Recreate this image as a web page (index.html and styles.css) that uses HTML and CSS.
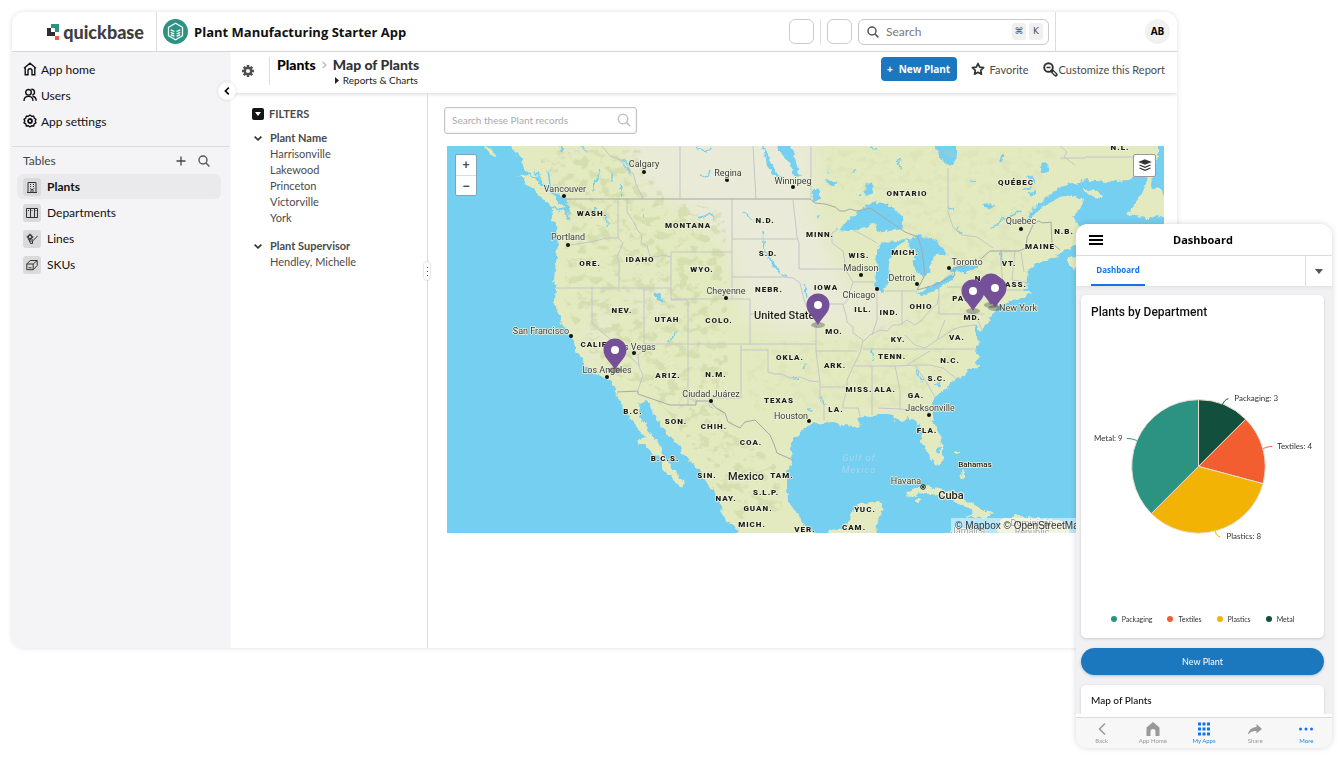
FILE: index.html
```html
<!DOCTYPE html>
<html lang="en">
<head>
<meta charset="utf-8">
<meta name="viewport" content="width=device-width, initial-scale=1">
<title>Plant Manufacturing Starter App</title>
<link rel="stylesheet" href="styles.css">
</head>
<body>
<div class="stage">
  <div class="window">
    <header class="topbar">
      <a class="brand" href="#" aria-label="quickbase">
        <svg width="13" height="16" viewBox="0 0 13 16"><path d="M4 0h8v8h-4V4H4z" fill="#2c9282"/><path d="M0 4h4v4h4v4H0z" fill="#2e2e2e"/><path d="M8 12h4v4H8z" fill="#f35e31"/></svg>
        <span>quickbase</span>
      </a>
      <div class="app-name">
        <svg width="25" height="25" viewBox="0 0 25 25" fill="none" stroke="#fff" stroke-width="1.300" stroke-linejoin="round"><circle cx="12.500" cy="12.500" r="12.500" fill="#2c9282" stroke="none"/><path d="M12.500 4.200l7 4v8.600l-7 4-7-4V8.200z"/><path d="M7.800 10.800l3.600 1.700M7.800 13.300l3.600 1.700M7.800 15.600l3.600 1.800M17.200 10.800l-3.600 1.700M17.200 13.300l-3.600 1.700M17.200 15.600l-3.600 1.800"/></svg>
        <h1>Plant Manufacturing Starter App</h1>
      </div>
      <div class="top-actions">
        <button class="square" type="button" aria-label="Notifications"></button>
        <span class="sep"></span>
        <button class="square" type="button" aria-label="Help"></button>
        <label class="global-search">
          <svg width="12" height="12" viewBox="0 0 12 12" fill="none" stroke="#555" stroke-width="1.500"><circle cx="5" cy="5" r="4"/><path d="M8 8l3.400 3.400"/></svg>
          <input type="search" placeholder="Search" aria-label="Search">
          <kbd>⌘</kbd><kbd>K</kbd>
        </label>
      </div>
      <div class="account"><button class="avatar" type="button">AB</button></div>
    </header>

    <div class="body">
      <aside class="sidebar">
        <nav class="main-nav">
          <a href="#"><svg width="14" height="14" viewBox="0 0 14 14" fill="none" stroke="#111" stroke-width="1.400"><path d="M1 6.200L7 1.200l6 5M2.200 5.500V12.800H5V8.800a2 2 0 0 1 4 0v4h2.800V5.500"/></svg>App home</a>
          <a href="#"><svg width="14" height="14" viewBox="0 0 14 14" fill="none" stroke="#111" stroke-width="1.400"><circle cx="5.500" cy="4.300" r="2.800"/><path d="M1 13c0-3 1.800-4.600 4.500-4.600S10 10 10 13M8.300 1.300a2.900 2.900 0 0 1 1 5.700M9.500 8.200c2.300.300 3.600 1.800 3.700 4.500"/></svg>Users</a>
          <a href="#"><svg width="14" height="14" viewBox="0 0 14 14" fill="none" stroke="#111" stroke-width="1.400" stroke-linejoin="round"><path d="M7 1l1.600 1.300 2.100-.200.500 2.100L13 5.300 12.200 7l.8 1.800-1.800 1.100-.5 2.100-2.100-.200L7 13l-1.600-1.200-2.100.200-.5-2.100L1 8.800 1.800 7 1 5.300l1.800-1.100.5-2.100 2.100.200z"/><circle cx="7" cy="7" r="2" stroke-width="1.800"/></svg>App settings</a>
        </nav>
        <div class="tables-head">
          <h2>Tables</h2>
          <button type="button" aria-label="Add table"><svg width="10" height="10" viewBox="0 0 10 10" stroke="#444" stroke-width="1.300"><path d="M5 .5v9M.5 5h9"/></svg></button>
          <button type="button" aria-label="Search tables"><svg width="12" height="12" viewBox="0 0 12 12" fill="none" stroke="#555" stroke-width="1.400"><circle cx="5" cy="5" r="4"/><path d="M8 8l3.400 3.400"/></svg></button>
        </div>
        <nav class="table-nav">
          <a class="active" href="#"><i><svg width="12" height="12" viewBox="0 0 12 12" fill="none" stroke="#333"><path d="M1 11.500h10M2 11V1.500h8V11M5 11V8.500h2V11M4 3.500h1M7 3.500h1M4 5.500h1M7 5.500h1M4 7.500h.7M7.500 7.500h.7"/></svg></i>Plants</a>
          <a href="#"><i><svg width="12" height="12" viewBox="0 0 12 12" fill="none" stroke="#333"><path d="M.5 1.500h11v9H.5zM4.500 1.500v9M8.500 1.500v9M2 3.500h1M5.500 3.500h1M9.500 3.500h1"/></svg></i>Departments</a>
          <a href="#"><i><svg width="12" height="12" viewBox="0 0 12 12" fill="none" stroke="#333"><circle cx="4" cy="4" r="1.600"/><path d="M4 .8L.8 4 4 7.200 7.200 4zM2.500 6l1 2M5.500 5.700l1.500 2L11.500 3M3.500 8h3v2.500h-2z"/></svg></i>Lines</a>
          <a href="#"><i><svg width="12" height="12" viewBox="0 0 12 12" fill="none" stroke="#333"><path d="M.8 5h6.400v5.700H.8zM.8 5l3.400-3.500h7L7.200 5M11.200 1.500v5l-4 4.200M2.500 8.800h3"/></svg></i>SKUs</a>
        </nav>
        <button class="collapse" type="button" aria-label="Collapse sidebar"><svg width="6" height="8" viewBox="0 0 6 8" fill="none" stroke="#000" stroke-width="1.600"><path d="M4.800.6L1.400 4l3.400 3.400"/></svg></button>
      </aside>

      <main class="content">
        <div class="page-head">
          <button class="gear" type="button" aria-label="Page settings"><svg width="12" height="12" viewBox="0 0 12 12"><g stroke="#4f4f4f" stroke-width="2.600"><path d="M6 0v12M0 6h12M1.800 1.800l8.400 8.400M10.200 1.800l-8.400 8.400"/></g><circle cx="6" cy="6" r="3.200" fill="#fff" stroke="#4f4f4f" stroke-width="2.300"/></svg></button>
          <div class="crumbs">
            <a class="crumb-root" href="#">Plants</a>
            <svg width="5" height="8" viewBox="0 0 5 8" fill="none" stroke="#bbb" stroke-width="1.400"><path d="M.7 1L3.900 4 .7 7"/></svg>
            <h2>Map of Plants</h2>
            <a class="reports" href="#"><svg width="4" height="7" viewBox="0 0 4 7"><path d="M0 0l4 3.500L0 7z" fill="#222"/></svg>Reports &amp; Charts</a>
          </div>
          <div class="page-actions">
            <button class="primary" type="button"><span>+</span>New Plant</button>
            <button class="plain" type="button"><svg width="14" height="14" viewBox="0 0 14 14" fill="none" stroke="#333" stroke-width="1.700" stroke-linejoin="round"><path d="M7 1.500l1.700 3.600 3.900.5-2.900 2.700.8 3.900L7 10.300l-3.500 1.900.8-3.900L1.400 5.600l3.900-.5z"/></svg>Favorite</button>
            <button class="plain custom" type="button"><svg width="15" height="15" viewBox="0 0 15 15" fill="none" stroke="#333"><circle cx="5.500" cy="5.500" r="4.300" stroke-width="1.900"/><path d="M3.500 5.500h4" stroke-width="1.500"/><path d="M9 9l3.700 3.700" stroke-width="3.800" stroke-linecap="round"/><path d="M10 9.800l2.700 2.900" stroke="#fff" stroke-width="1.200"/></svg>Customize this Report</button>
          </div>
        </div>

        <div class="report">
          <section class="filters">
            <h3 class="filters-title"><svg width="12" height="12" viewBox="0 0 12 12"><rect width="12" height="12" rx="2" fill="#151515"/><path d="M3 4h6L6 8z" fill="#fff"/></svg>FILTERS</h3>
            <div class="filter-group">
              <h4><svg width="8" height="5" viewBox="0 0 8 5" fill="none" stroke="#333" stroke-width="1.600"><path d="M.6.6L4 3.900 7.400.6"/></svg>Plant Name</h4>
              <ul><li><a href="#">Harrisonville</a></li><li><a href="#">Lakewood</a></li><li><a href="#">Princeton</a></li><li><a href="#">Victorville</a></li><li><a href="#">York</a></li></ul>
            </div>
            <div class="filter-group">
              <h4><svg width="8" height="5" viewBox="0 0 8 5" fill="none" stroke="#333" stroke-width="1.600"><path d="M.6.6L4 3.900 7.400.6"/></svg>Plant Supervisor</h4>
              <ul><li><a href="#">Hendley, Michelle</a></li></ul>
            </div>
            <span class="grip"><b></b><b></b><b></b></span>
          </section>

          <section class="results">
            <label class="record-search">
              <input type="search" placeholder="Search these Plant records" aria-label="Search these Plant records">
              <svg width="14" height="14" viewBox="0 0 14 14" fill="none" stroke="#bdbdbd" stroke-width="1.300"><circle cx="6" cy="6" r="4.800"/><path d="M9.500 9.500l3.700 3.700"/></svg>
            </label>
            <div class="map">
              <svg class="map-art" viewBox="447 146 717 387" role="img" aria-label="Map of plants">
                <defs>
                  <filter id="rough" color-interpolation-filters="sRGB" filterUnits="userSpaceOnUse" x="437" y="136" width="737" height="407"><feTurbulence type="fractalNoise" baseFrequency=".16" numOctaves="3" seed="4" result="n"/><feDisplacementMap in="SourceGraphic" in2="n" scale="7" xChannelSelector="R" yChannelSelector="G"/></filter>
                  <filter id="relief" color-interpolation-filters="sRGB" filterUnits="userSpaceOnUse" x="437" y="136" width="737" height="407"><feTurbulence type="fractalNoise" baseFrequency=".09 .12" numOctaves="4" seed="12"/><feColorMatrix values="0 0 0 0 .80  0 0 0 0 .84  0 0 0 0 .64  0 7 0 0 -3.600"/><feComposite in2="SourceAlpha" operator="in"/></filter>
                  <filter id="soft" color-interpolation-filters="sRGB" x="-30%" y="-30%" width="160%" height="160%"><feGaussianBlur stdDeviation="10"/></filter>
                  <clipPath id="land-clip"><use href="#land"/></clipPath>
                  <path id="land" d="M511 140L511 148 520 157 523 168 529 173 540 179 547 185 555 193 565 196 568 203 570 212 568 222 565 212 552 209 553 218 557 227 558 240 557 257 555 270 554 280 556 288 555 300 555 307 559 313 561 323 568 332 571 338 576 347 576 352 582 358 587 367 593 374 605 377 612 383 617 392 618 397 623 407 628 415 632 422 640 430 645 437 637 442 644 445 652 452 662 460 662 468 670 477 681 488 684 484 677 473 670 465 662 452 658 443 650 433 643 422 639 413 638 403 645 400 653 407 655 417 662 427 670 438 680 447 687 458 700 471 707 483 715 493 722 502 720 512 727 520 737 528 739 545 813 545 813 532 804 525 797 513 788 502 787 487 787 472 792 460 790 445 795 437 805 428 813 422 823 423 835 422 843 425 853 426 862 425 857 420 862 417 880 415 890 415 900 422 908 418 915 422 922 428 921 440 927 452 935 466 942 463 943 453 941 440 935 423 933 408 935 398 947 388 955 379 962 377 968 370 980 367 975 362 981 358 976 351 980 343 976 333 974 323 977 325 980 333 988 322 997 310 999 304 1017 300 1032 293 1022 290 1028 287 1025 278 1028 270 1040 262 1057 256 1063 252 1077 245 1090 250 1100 230 1078 225 1073 216 1083 204 1082 198 1072 195 1060 197 1043 206 1033 217 1026 222 1033 208 1047 197 1060 187 1087 180 1107 182 1127 180 1140 173 1155 167 1158 155 1158 140 957 140 957 155 950 168 940 158 932 140zM485 146L492 148 495 158 488 152zM519 176L530 175 547 188 561 203 566 209 553 207 540 197 528 184zM1082 188L1092 189 1104 196 1102 199 1089 195zM1147 177L1153 177 1152 186 1164 193 1175 195 1175 217 1163 217 1147 218 1127 215 1133 207 1142 193zM1067 260L1080 255 1080 270 1070 267zM905 495L912 490 923 486 940 488 960 497 980 508 995 514 990 517 967 517 972 512 960 503 947 498 930 495 920 492 912 497zM843 540L843 528 851 520 853 508 860 503 880 502 884 507 880 515 877 523 876 540zM1003 518L1020 516 1053 520 1070 525 1070 540 1003 540 997 530zM955 530L970 530 977 534 957 535zM827 540L829 530 843 528 850 540zM917 498l4 1-1 4-4-2zM961 470l3 1 0 6 -2 2zM956 452l5 0 0 1-5 0z"/>
                </defs>
                <rect x="437" y="136" width="740" height="410" fill="#75cff0"/>
                <g filter="url(#rough)"><use href="#land" fill="#e3eac0"/></g>
                <g clip-path="url(#land-clip)">
                  <g fill="#e9ead7" filter="url(#soft)"><path d="M620 130L815 130 812 215 840 265 850 310 800 335 745 320 730 250 680 205 645 195z"/><ellipse cx="600" cy="335" rx="12" ry="30" opacity=".6"/><ellipse cx="860" cy="310" rx="45" ry="25" opacity=".7"/><ellipse cx="650" cy="300" rx="18" ry="20" opacity=".5"/></g>
                </g>
                <g filter="url(#relief)" opacity=".6"><path d="M535 150L640 150 665 200 725 210 728 380 710 395 730 420 780 470 782 510 740 520 700 460 670 415 640 385 605 370 580 340 565 300 565 215 550 180z"/></g>
                <g filter="url(#relief)" opacity=".22"><path d="M815 150L1060 150 1030 200 1020 250 985 290 960 350 910 405 830 410 750 410 745 340 850 340 940 300 950 260 850 200z"/></g>
                <g class="water" filter="url(#rough)">
                  <path d="M837 230L860 210 873 202 890 205 902 217 903 228 890 230 878 233 875 223 860 229 851 231zM877 250L883 242 908 240 900 244 893 252 890 260 888 273 888 284 882 293 875 288 876 270zM906 239L918 236 937 240 949 256 937 253 932 258 929 272 923 277 917 273 913 263 916 253 908 245zM917 293L930 287 953 273 953 280 934 291 922 295zM950 269L965 264 980 265 973 271 955 273zM778 140L788 140 795 158 800 178 794 177 791 165 779 150zM761 140L768 155 772 165 781 178 776 177 766 165zM812 192l8-3 2 10-9 2zM865 185l8-3 1 11-8 2zM825 180l10 2 3-3-3 7-6 0zM1040 163l8-1 1 8-7 3zM983 206l6-4 6 4-5 3zM653 292l7 3 4 9-4-1zM936 449l4-1 0 4-3 1zM817 215l4-1-3 5zM826 169l3 4-2-1zM1022 190l10-4-2 5z"/>
                  <path class="stream" d="M623 163l7 10-3-11-6-2M600 170l-4 10-3 12M612 172l0 10M620 185l2 12M596 206l-5 12M644 213l0 5M608 225l-3-10M698 146l8 7 5-5M699 176l8 1 3-5M699 218l10-3 4 2M742 212l12 8M763 232l2 18 8 13 7 10 7 3M851 173l5-3M872 148l4 1M1003 155l-3 7M995 225l-4 5M1002 250l-1 14M1035 192l-6 2M1028 175l6 8M970 180l5 2M955 210l-6-3M915 250l-6-5M872 348l2 12M806 363l-3 6M792 379l6-1M807 410l6 0M668 342l8-10M708 403l3 5M916 371l6 10M936 383l6 2M804 283l3 14M858 195l3-2M1020 210l-25 15M957 228l4 5M902 170l-4-10M580 146l7 5M825 404l-5-8M560 146l3 4M535 170l6 9M548 170l3 22"/>
                </g>
                <g class="states">
                  <path d="M570 245L590 242 607 238 618 238M618 199V238L623 243 617 257 619 263V288M556 288H671M627 199V212L634 222 638 231 642 235 641 243 647 246 650 256 656 257 663 255 671 257M671 252V300H688M671 252H732M732 199V299M671 299H750M688 299V405M644 344H816M750 299V345M750 314H808M732 277H773L783 277 793 278 800 283 802 292 805 303 810 313 816 322V351M644 288V350L638 355 639 367 643 375 638 390M592 288V323L640 366M741 345V398H711M741 350H768V372L775 374 782 374 790 378 800 377 810 381 820 382V400L824 405 824 420M816 351L820 382M816 351H857M820 387H847M732 239H798M793 200L795 218 797 237 799 243V269H845M808 304H843M837 230L832 233 832 243 843 251 845 263V269L853 282 850 291 850 297 843 305 846 315 847 322 853 327 853 333 863 340 860 353 853 367 847 380V390L843 403V408H858L860 416M853 282H877M877 292V320L872 335M902 291V325M885 291H915M863 342L870 335 880 330 887 331 893 325 900 325 907 320 915 325 922 320 930 310 937 304 939 295M863 349H977M855 366H898L915 365 920 373 927 383 935 397M907 365L915 360 930 351M915 365H930L943 368 957 379M872 366V415M895 366L900 390V410M878 408L902 409 930 412M939 287V314H985M947 287H985L990 305M937 340L945 335 952 330 960 327 975 325M905 335L915 345 925 348 937 340 945 320M853 230L865 236 877 243M680 146V199M753 146L756 199M811 146V199M602 146L610 156 616 158 623 163 627 170 633 173 636 184 643 199M948 168V212L953 227 962 235 977 237 993 248M1000 251L1003 285M1015 251L1012 280 1025 282M1003 290H1022M1021 252L1024 272M1060 158L1085 158 1085 157 1150 157M1060 146L1067 152 1064 157 1075 165M975 314L982 330"/>
                  <path class="nation" d="M566 199H810L815 203 825 204 835 207 840 211 845 211 850 209 857 211 870 208 905 232 918 237 922 250 925 275 917 290 935 285 955 275 953 268 975 264 990 251H1019L1026 248 1027 238 1033 225 1038 221 1043 223 1051 222 1052 243 1060 250M617 392L638 391 638 394 670 405 696 405V401H710L716 408 725 413 728 422 740 428 745 422 755 420 763 428 770 435 774 444 777 453 793 460"/>
                </g>
                <g class="dots"><circle cx="644" cy="172" r="2"/><circle cx="564" cy="196" r="2"/><circle cx="727" cy="180" r="2"/><circle cx="793" cy="187" r="2"/><circle cx="568" cy="245" r="2"/><circle cx="861" cy="275" r="2"/><circle cx="877" cy="289" r="2"/><circle cx="917" cy="284" r="2"/><circle cx="949" cy="268" r="2"/><circle cx="1021" cy="229" r="2"/><circle cx="726" cy="298" r="2"/><circle cx="571" cy="336" r="2"/><circle cx="634" cy="353" r="2"/><circle cx="607" cy="377" r="2"/><circle cx="711" cy="401" r="2"/><circle cx="809" cy="421" r="2"/><circle cx="929" cy="415" r="2"/><circle cx="923" cy="487" r="2.300" fill="none" stroke="#222"/><circle cx="923" cy="487" r="1"/></g>
                <g class="state-names">
                  <text x="592" y="216">WASH.</text><text x="590" y="266">ORE.</text><text x="640" y="262">IDAHO</text><text x="688" y="228">MONTANA</text><text x="765" y="223">N.D.</text><text x="768" y="256">S.D.</text><text x="820" y="237">MINN.</text><text x="702" y="272">WYO.</text><text x="769" y="292">NEBR.</text><text x="826" y="290">IOWA</text><text x="859" y="258">WIS.</text><text x="905" y="255">MICH.</text><text x="907" y="196">ONTARIO</text><text x="1016" y="185">QUÉBEC</text><text x="1120" y="150">N.L.</text><text x="1064" y="234">N.B.</text><text x="1040" y="249">MAINE</text><text x="1009" y="266">VT.</text><text x="1012" y="287">MASS.</text><text x="984" y="281">N.Y.</text><text x="960" y="301">PA.</text><text x="972" y="320">MD.</text><text x="921" y="309">OHIO</text><text x="889" y="315">IND.</text><text x="863" y="312">ILL.</text><text x="834" y="334">MO.</text><text x="898" y="342">KY.</text><text x="957" y="340">VA.</text><text x="950" y="363">N.C.</text><text x="937" y="381">S.C.</text><text x="916" y="398">GA.</text><text x="892" y="359">TENN.</text><text x="835" y="368">ARK.</text><text x="859" y="392">MISS.</text><text x="885" y="392">ALA.</text><text x="836" y="412">LA.</text><text x="790" y="360">OKLA.</text><text x="779" y="403">TEXAS</text><text x="716" y="377">N.M.</text><text x="668" y="378">ARIZ.</text><text x="667" y="322">UTAH</text><text x="622" y="313">NEV.</text><text x="719" y="323">COLO.</text><text x="595" y="347">CALIF.</text><text x="633" y="414">B.C.</text><text x="676" y="424">SON.</text><text x="714" y="429">CHIH.</text><text x="751" y="445">COA.</text><text x="665" y="461">B.C.S.</text><text x="707" y="478">SIN.</text><text x="782" y="478">TAM.</text><text x="766" y="495">S.L.P.</text><text x="726" y="501">NAY.</text><text x="758" y="511">GUAN.</text><text x="752" y="527">MICH.</text><text x="805" y="532">VER.</text><text x="865" y="512">YUC.</text><text x="854" y="530">CAM.</text><text x="927" y="433">FLA.</text>
                </g>
                <g class="cities">
                  <text x="644" y="167">Calgary</text><text x="565" y="192">Vancouver</text><text x="728" y="176">Regina</text><text x="793" y="184">Winnipeg</text><text x="568" y="240">Portland</text><text x="861" y="271">Madison</text><text x="859" y="298">Chicago</text><text x="902" y="281">Detroit</text><text x="967" y="265">Toronto</text><text x="1021" y="224">Quebec</text><text x="1018" y="311">New York</text><text x="726" y="294">Cheyenne</text><text x="541" y="334">San Francisco</text><text x="635" y="350">Las Vegas</text><text x="607" y="373">Los Angeles</text><text x="711" y="397">Ciudad Juárez</text><text x="791" y="419">Houston</text><text x="930" y="411">Jacksonville</text><text x="906" y="484">Havana</text><text x="1032" y="526">Dominican</text><text x="1032" y="535">Republic</text><text x="968" y="534">Jamaica</text><text class="strong" x="975" y="467">Bahamas</text>
                </g>
                <g class="countries"><text x="787" y="319">United States</text><text x="746" y="480">Mexico</text><text x="951" y="499">Cuba</text></g>
                <g class="seas"><text x="859" y="461">Gulf of</text><text x="859" y="473">Mexico</text></g>
                <g class="pins">
                  <g id="pin"><ellipse cx="615" cy="370" rx="7" ry="3" fill="#222" opacity=".3"/><path d="M615 370C611 362 603.500 358 603.500 350A11.500 11.500 0 0 1 626.500 350C626.500 358 619 362 615 370z" fill="#745098"/><circle cx="615" cy="350" r="4" fill="#fff"/></g>
                  <use href="#pin" x="203" y="-45"/><use href="#pin" x="376" y="-65"/><use href="#pin" x="358" y="-59"/><use href="#pin" x="380" y="-62"/>
                </g>
              </svg>
              <div class="zoom"><button type="button">+</button><button type="button">−</button></div>
              <button class="layers" type="button" aria-label="Layers"><svg width="14" height="13" viewBox="0 0 14 13" fill="none" stroke="#333" stroke-width="1.300"><path d="M7 1l5 2-5 2-5-2z" fill="#333"/><path d="M1.500 6L7 8.300 12.500 6M1.500 9L7 11.300 12.500 9"/></svg></button>
              <p class="credit"><a href="#">© Mapbox</a> <a href="#">© OpenStreetMap</a></p>
            </div>
          </section>
        </div>
      </main>
    </div>
  </div>

  <section class="phone">
    <header class="phone-head">
      <button type="button" aria-label="Menu"><svg width="14" height="10" viewBox="0 0 14 10"><path d="M0 0h14v2H0zM0 4h14v2H0zM0 8h14v2H0z"/></svg></button>
      <h2>Dashboard</h2>
    </header>
    <div class="phone-tabs">
      <button class="tab" type="button">Dashboard</button>
      <button class="more-tabs" type="button" aria-label="More tabs"><svg width="8" height="5" viewBox="0 0 8 5"><path d="M0 0h8L4 5z" fill="#555"/></svg></button>
    </div>
    <div class="phone-body">
      <article class="card chart-card">
        <h3>Plants by Department</h3>
        <svg class="pie" viewBox="0 0 244 292" role="img" aria-label="Plants by Department">
          <g stroke="#e8ddd0" stroke-width="1">
            <path d="M118 146V79A67 67 0 0 1 165.400 98.600z" fill="#12503d"/>
            <path d="M118 146L165.400 98.600A67 67 0 0 1 182.700 163.300z" fill="#f35e31"/>
            <path d="M118 146L182.700 163.300A67 67 0 0 1 70.600 193.400z" fill="#f2b305"/>
            <path d="M118 146L70.600 193.400A67 67 0 0 1 118 79z" fill="#2c9282"/>
          </g>
          <g fill="none"><path d="M142 84c2-4 3-5 6-6" stroke="#12503d"/><path d="M183 128c3-1 5-2 9-2" stroke="#f35e31"/><path d="M135 211c0 3 2 5 5 6" stroke="#f2b305"/><path d="M56 120c-3-1-5-2-10-2" stroke="#2c9282"/></g>
          <g class="pie-labels"><text x="154" y="80">Packaging: 3</text><text x="197" y="129">Textiles: 4</text><text x="146" y="219">Plastics: 8</text><text x="13" y="120">Metal: 9</text></g>
        </svg>
        <ul class="legend"><li><i class="teal"></i>Packaging</li><li><i class="orange"></i>Textiles</li><li><i class="yellow"></i>Plastics</li><li><i class="green"></i>Metal</li></ul>
      </article>
      <button class="new-plant" type="button">New Plant</button>
      <article class="card map-card"><h3>Map of Plants</h3></article>
    </div>
    <nav class="phone-nav">
      <button type="button"><svg width="16" height="14" viewBox="0 0 16 14" fill="none" stroke="#999" stroke-width="1.500"><path d="M11 1.500L5.500 7l5.500 5.500"/></svg>Back</button>
      <button type="button"><svg width="16" height="14" viewBox="0 0 16 14"><path d="M1.500 5.500L8 0l6.500 5.500V14H10.500V9.500a2.500 2.500 0 0 0-5 0V14h-4z" fill="#999"/></svg>App Home</button>
      <button class="current" type="button"><svg width="16" height="14" viewBox="0 0 16 14" fill="#1273ef"><path d="M2 .5h3v3H2zM6.500.5h3v3h-3zM11 .5h3v3h-3zM2 5.500h3v3H2zM6.500 5.500h3v3h-3zM11 5.500h3v3h-3zM2 10.500h3v3H2zM6.500 10.500h3v3h-3zM11 10.500h3v3h-3z"/></svg>My Apps</button>
      <button type="button"><svg width="16" height="14" viewBox="0 0 16 14"><path d="M9.500 2L15 7l-5.500 4.500V9C6 8.800 3.500 9.800 1 12.500 1.500 8.500 4.500 5.200 9.500 5z" fill="#999"/></svg>Share</button>
      <button class="current" type="button"><svg width="16" height="14" viewBox="0 0 16 14" fill="#1273ef"><circle cx="2.500" cy="7" r="1.500"/><circle cx="8" cy="7" r="1.500"/><circle cx="13.500" cy="7" r="1.500"/></svg>More</button>
    </nav>
  </section>
</div>
</body>
</html>
```

FILE: styles.css
```css
* { box-sizing: border-box; }
body { margin: 0; background: #fff; color: #222; font-family: Lato, "Open Sans", sans-serif; font-size: 12px; }
h1, h2, h3, h4, p, ul { margin: 0; padding: 0; }
ul { list-style: none; }
a { color: inherit; text-decoration: none; }
button { margin: 0; padding: 0; border: 0; background: none; font: inherit; color: inherit; cursor: pointer; }
svg { display: block; flex: none; }
input { min-width: 0; border: 0; outline: 0; background: none; font: inherit; padding: 0; }

.stage { position: relative; min-height: 100vh; padding: 12px 165px 0 12px; }
.window { border-radius: 12px; background: #fff; box-shadow: 0 0 5px rgba(0, 0, 0, .13); overflow: hidden; }

.topbar { display: flex; height: 40px; border-bottom: 1px solid #ddd; }
.brand { display: flex; align-items: center; justify-content: flex-end; gap: 3px; width: 145px; padding-right: 12px; border-right: 1px solid #ddd; color: #3e3e3e; font-size: 18px; font-weight: 900; line-height: 20px; }
.app-name { display: flex; align-items: center; gap: 6px; padding-left: 6px; color: #111; }
.app-name h1 { font: 700 13px/20px "Open Sans", sans-serif; }
.top-actions { display: flex; align-items: center; gap: 6px; margin-left: auto; padding-right: 6px; border-right: 1px solid #ddd; }
.square { width: 25px; height: 25px; border: 1px solid #ccccc8; border-radius: 6px; }
.sep { width: 1px; height: 26px; background: #ddd; }
.global-search { display: flex; align-items: center; gap: 3px; width: 191px; height: 26px; padding: 0 5px 0 8px; border: 1px solid #c8c8c4; border-radius: 6px; }
.global-search input { flex: 1; margin-left: 4px; }
.global-search input::placeholder { color: #777; }
.global-search kbd { width: 14px; height: 17px; border-radius: 3px; background: #f0f0f0; color: #555; font: 9px/17px "DejaVu Sans", sans-serif; text-align: center; }
.account { display: flex; align-items: center; justify-content: flex-end; width: 121px; padding-right: 7px; }
.avatar { width: 25px; height: 25px; border-radius: 50%; background: #f1f1f1; color: #000; font: 700 10px/25px "Open Sans", sans-serif; }

.body { display: flex; min-height: 596px; }
.sidebar { position: relative; flex: none; width: 217px; background: #f4f4f6; color: #111; box-shadow: 1px 0 2px rgba(0, 0, 0, .08); z-index: 1; }
.main-nav { padding: 4px 11px 12px; border-bottom: 1px solid #dcdcde; }
.main-nav a { display: flex; align-items: center; gap: 4px; height: 26px; }
.tables-head { display: flex; align-items: center; gap: 12px; height: 27px; padding: 0 19px 0 11px; }
.tables-head h2 { flex: 1; color: #444; font-size: 12px; font-weight: 400; }
.table-nav { display: grid; gap: 1px; padding: 0 8px 0 5px; }
.table-nav a { display: flex; align-items: center; gap: 6px; height: 25px; padding-left: 6px; border-radius: 6px; }
.table-nav .active { background: #eaeaec; font-weight: 700; }
.table-nav i { display: grid; place-items: center; width: 18px; height: 18px; border-radius: 3px; background: #dadada; }
.collapse { position: absolute; top: 30px; right: -7px; display: grid; place-items: center; width: 18px; height: 18px; border-radius: 50%; background: #fff; box-shadow: 0 0 3px rgba(0, 0, 0, .15); }

.content { display: flex; flex-direction: column; flex: 1; min-width: 0; color: #4b4b4b; }
.page-head { display: flex; height: 41px; padding: 5px 12px 0 12px; box-shadow: 0 1px 4px rgba(0, 0, 0, .16); }
.gear { display: grid; place-items: center; width: 13px; height: 28px; margin-right: 15px; }
.crumbs { display: grid; grid-template-columns: auto 5px auto; column-gap: 6px; align-content: start; height: 28px; padding-left: 7px; border-left: 1px solid #ddd; align-items: center; }
.crumb-root, .crumbs h2 { font-size: 14px; font-weight: 900; line-height: 15px; }
.crumb-root { color: #000; }
.crumbs h2 { color: #333; }
.reports { grid-column: 3; display: flex; align-items: center; gap: 4px; padding-left: 2px; font-size: 10px; line-height: 16px; color: #222; }
.page-actions { display: flex; align-items: flex-start; gap: 14px; margin-left: auto; }
.primary { display: flex; align-items: center; justify-content: center; gap: 6px; width: 76px; height: 24px; border-radius: 4px; background: #1b77be; color: #fff; font: 700 10px/24px "Open Sans", sans-serif; }
.plain { display: flex; align-items: center; gap: 5px; height: 24px; font-size: 11px; white-space: nowrap; }
.custom { gap: 1px; }

.report { display: flex; flex: 1; }
.filters { position: relative; flex: none; width: 199px; padding: 13px 0 0 23px; border-right: 1px solid #ddd; font-size: 11px; line-height: 16px; }
.filters h3, .filters h4 { display: flex; align-items: center; font-size: 11px; font-weight: 700; }
.filters-title { gap: 5px; margin-bottom: 8px; }
.filter-group { margin-bottom: 12px; }
.filters h4 { gap: 8px; padding-left: 2px; }
.filters li { padding-left: 18px; }
.grip { position: absolute; top: 169px; right: -3px; display: grid; align-content: center; justify-items: center; gap: 3px; width: 6px; height: 18px; border-radius: 3px; background: #fff; box-shadow: 0 0 2px rgba(0, 0, 0, .3); }
.grip b { width: 1px; height: 1px; background: #444; }
.results { flex: 1; min-width: 0; padding: 14px 13px 0 19px; }
.record-search { display: flex; align-items: center; width: 193px; height: 27px; margin: 0 0 12px -3px; padding: 0 5px 2px 7px; border: 1px solid #c4c4c4; border-radius: 3px; font-size: 10px; box-shadow: inset 0 0 2px rgba(0, 0, 0, .15); }
.record-search input { flex: 1; }
.record-search input::placeholder { color: #aaa; }

.map { position: relative; overflow: hidden; }
.map-art { width: 100%; height: auto; }
.water { fill: #75cff0; }
.stream { fill: none; stroke: #75cff0; stroke-width: 1.5; }
.states { fill: none; stroke: #c3c6c9; stroke-width: 1; stroke-linejoin: round; }
.nation { stroke: #a4a8aa; }
.dots { fill: #111; }
.map-art text { text-anchor: middle; paint-order: stroke; stroke-linejoin: round; }
.state-names { font: 900 8px Roboto, sans-serif; letter-spacing: 1px; fill: #1d1d1d; stroke: #eff2da; stroke-width: 1.5px; }
.cities { font: 9px Roboto, sans-serif; fill: #3c3c3c; stroke: #eef2dd; stroke-width: 1.5px; }
.cities .strong { font-size: 8px; font-weight: 500; fill: #222; }
.countries { font: 500 11px Roboto, sans-serif; fill: #222; stroke: #eff2da; stroke-width: 2px; }
.seas { font: italic 9px Roboto, sans-serif; letter-spacing: 1px; fill: #a5d8f2; }
.zoom { position: absolute; top: 8px; left: 8px; display: grid; width: 22px; border: 1px solid #7ca5b3; border-radius: 2px; background: #fff; }
.zoom button { height: 20px; font: 700 12px/20px "Liberation Sans", sans-serif; }
.zoom button + button { border-top: 1px solid #ddd; }
.layers { position: absolute; top: 8px; right: 8px; display: grid; place-items: center; width: 23px; height: 23px; border: 1px solid #999; border-radius: 2px; background: #fff; }
.credit { position: absolute; right: 0; bottom: 0; width: 213px; padding: 0 4px; background: rgba(255, 255, 255, .5); color: #333; font: 10px/15px "Liberation Sans", sans-serif; white-space: nowrap; }

.phone { position: absolute; top: 224px; right: 10px; z-index: 2; display: flex; flex-direction: column; width: 256px; border-radius: 12px; background: #f1f1f3; overflow: hidden; box-shadow: 0 0 6px rgba(0, 0, 0, .16); }
.phone-head { display: grid; grid-template-columns: 40px 1fr 42px; align-items: center; height: 32px; border-bottom: 1px solid #e2e2e2; background: #fff; color: #000; }
.phone-head button { display: grid; justify-content: center; }
.phone-head h2 { font: 700 11px/16px "Open Sans", sans-serif; text-align: center; }
.phone-tabs { display: flex; height: 30px; background: #fff; justify-content: space-between; box-shadow: 0 1px 5px rgba(0, 0, 0, .08); }
.tab { width: 54px; margin-left: 15px; border-bottom: 2px solid #1273ef; color: #1273ef; font: 700 8px/28px "Open Sans", sans-serif; }
.more-tabs { display: grid; place-items: center; width: 27px; border-left: 1px solid #ddd; }
.phone-body { display: grid; gap: 10px; padding: 9px 8px 0 5px; }
.card { border-radius: 5px; background: #fff; box-shadow: 0 1px 3px rgba(0, 0, 0, .16); color: #111; }
.chart-card { padding-bottom: 12px; }
.chart-card h3 { padding: 9px 10px 0; font: 500 12px/17px Roboto, sans-serif; }
.pie { width: 100%; height: auto; }
.pie-labels { font: 8px Lato, sans-serif; fill: #333; }
.legend { display: flex; justify-content: center; gap: 15px; font-size: 7px; line-height: 14px; color: #333; }
.legend li { display: flex; align-items: center; gap: 5px; }
.legend i { width: 6px; height: 6px; border-radius: 50%; }
.teal { background: #2c9282; }
.orange { background: #f35e31; }
.yellow { background: #f2b305; }
.green { background: #12503d; }
.new-plant { height: 27px; border-radius: 14px; background: #1b77be; color: #fff; font-size: 9px; box-shadow: 0 1px 3px rgba(0, 0, 0, .2); }
.map-card { height: 29px; border-radius: 5px 5px 0 0; }
.map-card h3 { padding-left: 10px; font-size: 10px; font-weight: 500; line-height: 30px; }
.phone-nav { display: grid; grid-template-columns: repeat(5, 1fr); height: 34px; border-top: 3px solid #fff; background: #f7f7f8; color: #999; font-size: 6px; line-height: 8px; box-shadow: inset 0 1px #ddd; }
.phone-nav button { display: flex; flex-direction: column; align-items: center; justify-content: center; gap: 1px; padding-top: 2px; }
.phone-nav .current { color: #1b8fe0; }
```
